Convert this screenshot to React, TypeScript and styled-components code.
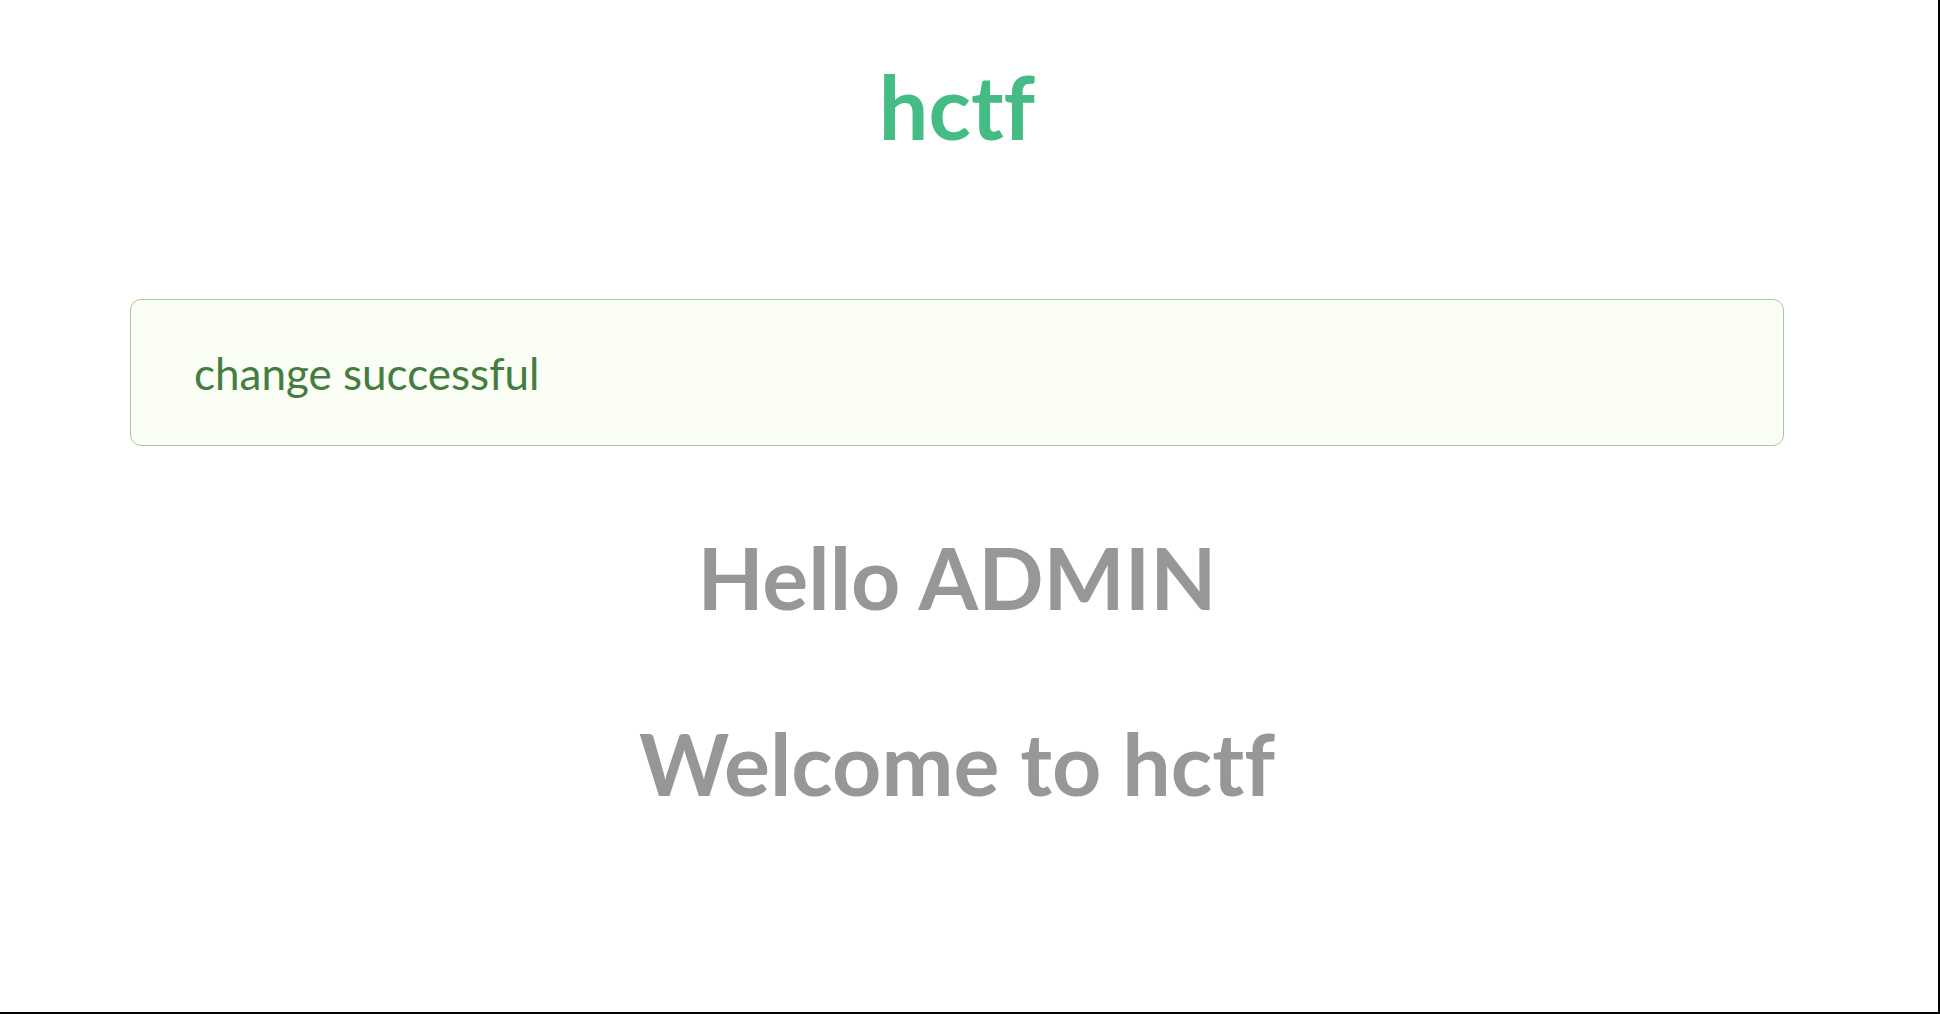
import React from "react";
import styled, { createGlobalStyle } from "styled-components";

const Global = createGlobalStyle`
  html, body { margin: 0; padding: 0; background: #fff; }
  body {
    font-family: Lato, "Open Sans", "Liberation Sans", sans-serif;
    font-variant-ligatures: none;
  }
  * { box-sizing: border-box; }
`;

const Frame = styled.div`
  width: 1940px;
  height: 1014px;
  border-right: 2px solid #000;
  border-bottom: 2px solid #000;
  overflow: hidden;
`;

const Container = styled.main`
  margin-left: 130px;
  width: 1654px;
  display: flex;
  flex-direction: column;
  align-items: stretch;
  text-align: center;
`;

const Brand = styled.h1`
  margin: 62px 0 0;
  font-size: 88px;
  line-height: 88px;
  font-weight: 700;
  color: #45bb86;
`;

const Alert = styled.div`
  margin-top: 149px;
  height: 147px;
  padding: 51px 63px 0;
  border: 1.5px solid #a2cf97;
  border-radius: 11px;
  background: #fbfef5;
  color: #437d40;
  font-size: 44px;
  line-height: 44px;
  text-align: left;
`;

const Heading = styled.h2<{ $gap: number }>`
  margin: ${(p) => p.$gap}px 0 0;
  font-size: 86px;
  line-height: 86px;
  font-weight: 700;
  color: #979797;
`;

export default function App() {
  return (
    <>
      <Global />
      <Frame>
        <Container>
          <Brand>hctf</Brand>
          <Alert>change successful</Alert>
          <Heading $gap={88}>Hello ADMIN</Heading>
          <Heading $gap={100}>Welcome to hctf</Heading>
        </Container>
      </Frame>
    </>
  );
}
